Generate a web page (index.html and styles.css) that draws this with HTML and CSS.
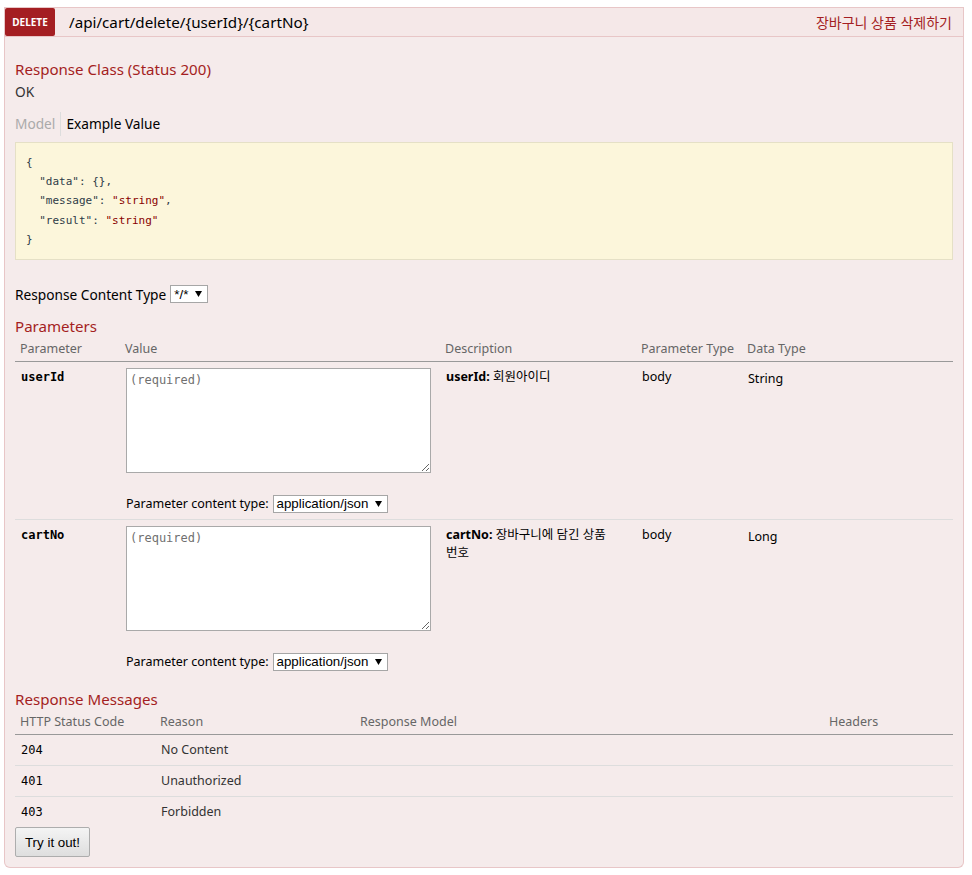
FILE: index.html
```html
<!DOCTYPE html>
<html lang="ko">
<head>
<meta charset="utf-8">
<title>DELETE /api/cart/delete</title>
<link rel="stylesheet" href="styles.css">
</head>
<body>
<div class="page">
  <div class="op">
    <div class="op-heading">
      <span class="method">DELETE</span>
      <span class="path">/api/cart/delete/{userId}/{cartNo}</span>
      <span class="summary">장바구니 상품 삭제하기</span>
    </div>
    <div class="op-content">
      <h4 class="sec-title first">Response Class (Status 200)</h4>
      <div class="ok">OK</div>
      <ul class="sig-nav">
        <li class="off">Model</li>
        <li class="on">Example Value</li>
      </ul>
      <pre class="example"><code>{
  "data": {},
  "message": <span class="s">"string"</span>,
  "result": <span class="s">"string"</span>
}</code></pre>
      <div class="rct">Response Content Type <span class="sel sel-small"><span class="sel-text">*/*</span><svg class="caret" width="7" height="6" viewBox="0 0 7 6"><path d="M0 0H7L3.5 6Z"/></svg></span></div>
      <h4 class="sec-title params-title">Parameters</h4>
      <table class="grid params">
        <colgroup><col class="c1"><col class="c2"><col class="c3"><col class="c4"><col class="c5"></colgroup>
        <thead>
          <tr><th>Parameter</th><th>Value</th><th>Description</th><th>Parameter Type</th><th>Data Type</th></tr>
        </thead>
        <tbody>
          <tr>
            <td class="pname">userId</td>
            <td>
              <textarea class="body-input" placeholder="(required)"></textarea>
              <div class="pct">Parameter content type: <span class="sel sel-wide"><span class="sel-text">application/json</span><svg class="caret" width="7" height="6" viewBox="0 0 7 6"><path d="M0 0H7L3.5 6Z"/></svg></span></div>
            </td>
            <td class="desc"><b>userId:</b> 회원아이디</td>
            <td class="ptype">body</td>
            <td class="dtype">String</td>
          </tr>
          <tr>
            <td class="pname">cartNo</td>
            <td>
              <textarea class="body-input" placeholder="(required)"></textarea>
              <div class="pct">Parameter content type: <span class="sel sel-wide"><span class="sel-text">application/json</span><svg class="caret" width="7" height="6" viewBox="0 0 7 6"><path d="M0 0H7L3.5 6Z"/></svg></span></div>
            </td>
            <td class="desc"><b>cartNo:</b> 장바구니에 담긴 상품 번호</td>
            <td class="ptype">body</td>
            <td class="dtype">Long</td>
          </tr>
        </tbody>
      </table>
      <h4 class="sec-title resp-title">Response Messages</h4>
      <table class="grid resp">
        <colgroup><col class="r1"><col class="r2"><col class="r3"><col class="r4"></colgroup>
        <thead>
          <tr><th>HTTP Status Code</th><th>Reason</th><th>Response Model</th><th>Headers</th></tr>
        </thead>
        <tbody>
          <tr><td class="code">204</td><td>No Content</td><td></td><td></td></tr>
          <tr><td class="code">401</td><td>Unauthorized</td><td></td><td></td></tr>
          <tr><td class="code">403</td><td>Forbidden</td><td></td><td></td></tr>
        </tbody>
      </table>
      <button class="try" type="button">Try it out!</button>
    </div>
  </div>
</div>
</body>
</html>
```
FILE: styles.css
```css
html, body {
  margin: 0;
  padding: 0;
  background: #ffffff;
}
body {
  font-family: "Noto Sans", "Open Sans", "Noto Sans CJK KR", sans-serif;
  font-size: 13.7px;
  color: #333333;
}
.page {
  padding: 7px 8px 0 4px;
}
.op {
  width: 960px;
}
.op-heading {
  display: flex;
  align-items: center;
  height: 28px;
  background: #f5e8e8;
  border: 1px solid #e8c6c7;
}
.method {
  width: 50px;
  height: 28px;
  line-height: 29px;
  background: #a41e22;
  color: #ffffff;
  border-radius: 2px;
  font-size: 10px;
  font-weight: 700;
  text-align: center;
  flex: none;
}
.path {
  margin-left: 14px;
  font-size: 15.2px;
  color: #000000;
}
.summary {
  margin-left: auto;
  padding-right: 11px;
  font-size: 14px;
  color: #a41e22;
  font-family: "Noto Sans", "Noto Sans CJK KR", sans-serif;
}
.op-content {
  background: #f5ebeb;
  border: 1px solid #e8c6c7;
  border-top: none;
  border-radius: 0 0 6px 6px;
  padding: 10px;
}
.sec-title {
  margin: 0;
  font-size: 15.1px;
  font-weight: 400;
  line-height: 20px;
  color: #a41e22;
}
.sec-title.first { margin-top: 12px; }
.ok {
  margin-top: 4px;
  line-height: 18px;
  color: #333333;
}
.sig-nav {
  list-style: none;
  margin: 11px 0 0;
  padding: 0;
  display: flex;
  height: 24px;
  line-height: 24px;
}
.sig-nav li { padding: 0 5px; }
.sig-nav li.off {
  padding-left: 0;
  color: #aaaaaa;
  border-right: 1px solid #dddddd;
}
.sig-nav li.on { color: #000000; }
.example {
  margin: 6px 0 0;
  padding: 10px;
  background: #fcf6db;
  border: 1px solid #e5e0c6;
  font-family: "DejaVu Sans Mono", monospace;
  font-size: 11px;
  line-height: 19.2px;
  color: #2e3b48;
}
.example .s { color: #880000; }
.rct {
  margin-top: 25px;
  display: flex;
  align-items: center;
  height: 18px;
  color: #000000;
  gap: 4px;
}
.sel {
  display: inline-flex;
  align-items: center;
  justify-content: space-between;
  box-sizing: border-box;
  height: 18px;
  background: #ffffff;
  border: 1px solid #a6a6a6;
  padding: 0 5px 0 3px;
  font-family: "Liberation Sans", Arial, sans-serif;
  font-size: 13.33px;
  color: #000000;
}
.sel-small { width: 38px; }
.sel-wide { width: 115px; }
.caret { fill: #000000; }
.params-title { margin-top: 13px; }
.resp-title { margin-top: 12px; }
.grid {
  width: 938px;
  table-layout: fixed;
  border-collapse: collapse;
  border-spacing: 0;
}
.grid th {
  padding: 5px;
  font-size: 12.5px;
  font-weight: 400;
  line-height: 15px;
  color: #666666;
  text-align: left;
  border-bottom: 1px solid #999999;
}
.grid td {
  padding: 6px;
  font-size: 12.5px;
  line-height: 18px;
  color: #333333;
  vertical-align: top;
  border-top: 1px solid #dddddd;
}
.grid tbody tr:first-child td { border-top: none; }
.params .c1 { width: 105px; }
.params .c2 { width: 320px; }
.params .c3 { width: 196px; }
.params .c4 { width: 106px; }
.params .c5 { width: 211px; }
.resp .r1 { width: 140px; }
.resp .r2 { width: 200px; }
.resp .r3 { width: 469px; }
.resp .r4 { width: 129px; }
.pname {
  font-family: "DejaVu Sans Mono", monospace;
  font-weight: 700;
  font-size: 12px !important;
  color: #000000 !important;
}
.code {
  font-family: "DejaVu Sans Mono", monospace;
  font-size: 12px !important;
  color: #000000 !important;
}
.body-input {
  display: block;
  box-sizing: border-box;
  width: 305px;
  height: 105px;
  margin: 0;
  padding: 3px;
  border: 1px solid #a9a9a9;
  background: #ffffff;
  font-family: "DejaVu Sans Mono", monospace;
  font-size: 12px;
  line-height: 16px;
  resize: both;
}
.body-input::placeholder { color: #707070; }
.pct {
  margin-top: 21px;
  display: flex;
  align-items: center;
  gap: 4px;
  height: 19px;
  color: #000000;
}
.desc {
  color: #000000 !important;
  word-break: keep-all;
}
.desc b { font-weight: 700; }
.ptype, .dtype { color: #000000 !important; }
.dtype { padding-top: 8px !important; }
.try {
  display: block;
  margin: 0;
  height: 30px;
  width: 75px;
  padding: 0;
  border: 1px solid #adadad;
  border-radius: 2px;
  background: linear-gradient(#f4f4f4, #dedede);
  font-family: "Liberation Sans", Arial, sans-serif;
  font-size: 13.33px;
  color: #000000;
}
```
